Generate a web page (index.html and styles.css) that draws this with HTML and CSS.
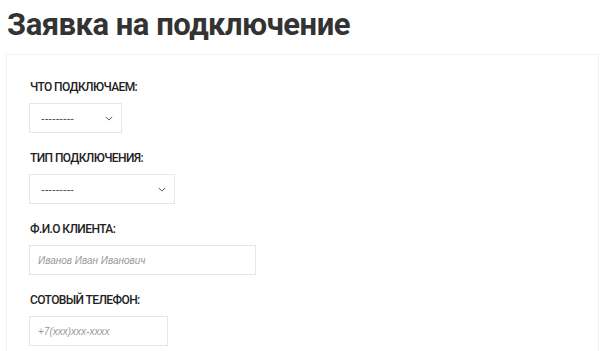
FILE: index.html
```html
<!DOCTYPE html>
<html lang="ru">
<head>
  <meta charset="UTF-8" />
  <title>Заявка на подключение</title>
  <link rel="stylesheet" href="styles.css">
</head>
<body>

  <h1 class="page-title">Заявка на подключение</h1>

  <!-- Форма заявки -->
  <form class="request-form">
    <div class="form-row">
      <label class="form-label">Что подключаем:</label>
      <div class="select-box select-short">
        <span>---------</span>
        <svg viewBox="0 0 10 6" width="8" height="5"><path d="M1 1l4 4 4-4" fill="none" stroke="#555" stroke-width="1.2"/></svg>
      </div>
    </div>

    <div class="form-row">
      <label class="form-label">Тип подключения:</label>
      <div class="select-box select-long">
        <span>---------</span>
        <svg viewBox="0 0 10 6" width="8" height="5"><path d="M1 1l4 4 4-4" fill="none" stroke="#555" stroke-width="1.2"/></svg>
      </div>
    </div>

    <div class="form-row">
      <label class="form-label">Ф.И.О клиента:</label>
      <input class="text-input input-name" type="text" placeholder="Иванов Иван Иванович">
    </div>

    <div class="form-row">
      <label class="form-label">Сотовый телефон:</label>
      <input class="text-input input-phone" type="text" placeholder="+7(xxx)xxx-xxxx">
    </div>
  </form>

</body>
</html>
```

FILE: styles.css
```css
body {
  margin: 0;
  padding: 0 1px 0 6px;
  background: #fff;
  font-family: Roboto, "Open Sans", Arial, sans-serif;
  color: #333;
}

.page-title {
  margin: 0;
  padding: 3px 0 0 1px;
  font-size: 31px;
  font-weight: 700;
  letter-spacing: -0.5px;
  line-height: 44px;
  color: #333;
}

.request-form {
  margin-top: 7px;
  border: 1px solid #f2f2f2;
  padding: 23px 23px 10px 22px;
}

.form-row {
  margin-bottom: 16px;
}

.form-label {
  display: block;
  font-size: 12px;
  font-weight: 500;
  letter-spacing: -0.6px;
  text-transform: uppercase;
  color: #222;
  line-height: 18px;
  margin-bottom: 7px;
  padding-left: 1px;
}

.select-box {
  display: flex;
  align-items: center;
  justify-content: space-between;
  box-sizing: border-box;
  height: 30px;
  border: 1px solid #e6e6e6;
  padding: 0 8px 0 11px;
  font-family: Arial, sans-serif;
  font-size: 11px;
  color: #444;
  background: #fff;
}

.select-short {
  width: 93px;
}

.select-long {
  width: 146px;
}

.text-input {
  display: block;
  box-sizing: border-box;
  height: 30px;
  border: 1px solid #e6e6e6;
  padding: 0 8px;
  font-family: "Liberation Sans", Arial, sans-serif;
  font-size: 10px;
  font-style: italic;
  outline: none;
}

.text-input::placeholder {
  color: #999;
}

.input-name {
  width: 227px;
}

.input-phone {
  width: 139px;
}
```
